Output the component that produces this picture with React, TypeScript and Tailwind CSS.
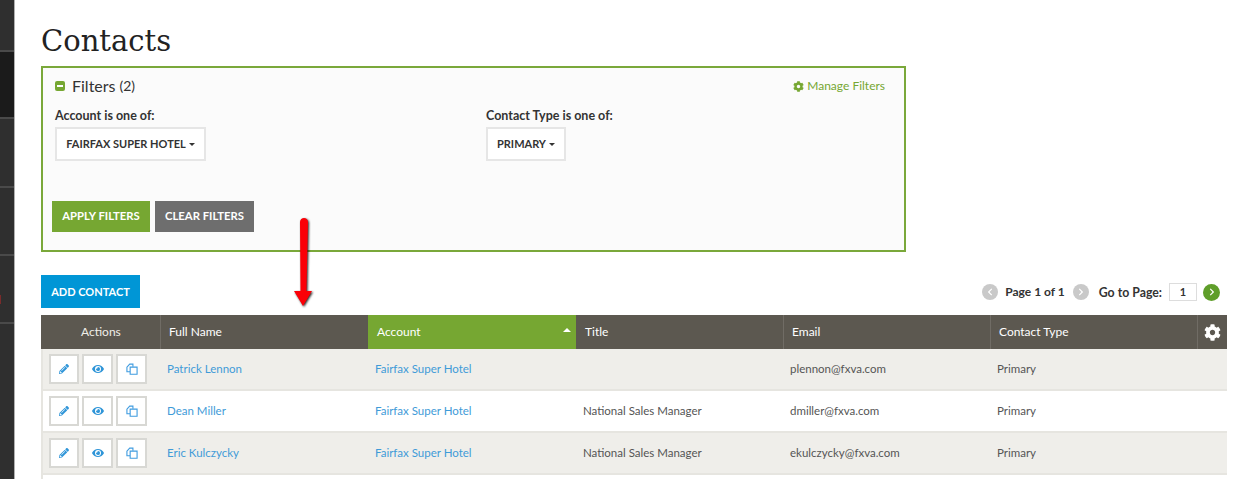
import React from 'react';
import { FaChevronLeft, FaChevronRight, FaCog, FaEye, FaPencilAlt } from 'react-icons/fa';

const rows = [
  { name: 'Patrick Lennon', title: '', email: 'plennon@fxva.com' },
  { name: 'Dean Miller', title: 'National Sales Manager', email: 'dmiller@fxva.com' },
  { name: 'Eric Kulczycky', title: 'National Sales Manager', email: 'ekulczycky@fxva.com' },
];

const columns = 'grid grid-cols-[119px_208px_208px_207px_207px_207px_30px]';

const IconButton = ({ children }: { children: React.ReactNode }) => (
  <div className="flex h-[30px] w-[31px] items-center justify-center border-2 border-[#d8d8d4] bg-white text-[#2f95d8] first:w-[30px]">
    {children}
  </div>
);

const CopyIcon = () => (
  <svg width="12" height="12" viewBox="0 0 13 13" fill="none" stroke="#3f9ce0" strokeWidth="1.2">
    <path d="M4.5 9.5H1V4.5L4 1.2H7.5V4" />
    <path d="M4.5 4.5H12V12.2H4.5Z" fill="#fff" />
  </svg>
);

const Sidebar = () => (
  <div className="flex w-[15px] shrink-0 flex-col border-r border-[#b0b0b0] bg-[#2f2f2f]">
    <div className="h-[52px] border-b-2 border-[#4a4a4a]" />
    <div className="h-[67px] border-b-2 border-[#4a4a4a] bg-[#1b1b1b]" />
    <div className="h-[69px] border-b-2 border-[#4a4a4a]" />
    <div className="h-[68px] border-b-2 border-[#4a4a4a]" />
    <div className="h-[68px] border-b-2 border-[#4a4a4a] pt-[39px]">
      <div className="h-[9px] w-[1px] bg-[#7a2b2b]" />
    </div>
  </div>
);

const Filters = () => (
  <div className="mt-[6px] h-[186px] w-[865px] border-2 border-[#7aa83a] bg-[#fbfbfb] pl-[9px]">
    <div className="flex items-start justify-between pr-[19px] pl-[3px] pt-[8px]">
      <div className="flex items-center">
        <span className="flex h-[10px] w-[10px] items-center justify-center rounded-[2px] bg-[#76a732]">
          <span className="h-[2px] w-[6px] bg-white" />
        </span>
        <span className="ml-[7px] text-[16px] leading-[20px] text-[#333]">Filters</span>
        <span className="ml-[4px] text-[14px] leading-[20px] text-[#333]">(2)</span>
      </div>
      <div className="mt-[1px] flex items-center gap-[3px] text-[12px] text-[#76a732]">
        <FaCog size={11} />
        <span>Manage Filters</span>
      </div>
    </div>
    <div className="mt-[12px] flex pl-[3px]">
      <div className="w-[431px]">
        <div className="text-[12.5px] leading-[16px] font-bold text-[#333]">Account is one of:</div>
        <div className="mt-[3px] flex h-[34px] w-[151px] items-center justify-center gap-[3px] border-2 border-[#e6e6e6] bg-white text-[11px] font-bold text-[#333]">
          FAIRFAX SUPER HOTEL
          <span className="mt-[1px] border-x-[3px] border-t-[3px] border-x-transparent border-t-[#333]" />
        </div>
      </div>
      <div>
        <div className="text-[12.5px] leading-[16px] font-bold text-[#333]">Contact Type is one of:</div>
        <div className="mt-[3px] flex h-[34px] w-[80px] items-center justify-center gap-[3px] border-2 border-[#e6e6e6] bg-white text-[11px] font-bold text-[#333]">
          PRIMARY
          <span className="mt-[1px] border-x-[3px] border-t-[3px] border-x-transparent border-t-[#333]" />
        </div>
      </div>
    </div>
    <div className="mt-[40px] flex gap-[5px] text-[11.3px] font-bold text-white">
      <div className="flex h-[31px] w-[98px] items-center justify-center bg-[#76a732]">APPLY FILTERS</div>
      <div className="flex h-[31px] w-[99px] items-center justify-center bg-[#6e6e6e]">CLEAR FILTERS</div>
    </div>
  </div>
);

const Pager = () => (
  <div className="flex items-center pb-[6px] pr-[7px] text-[12px] font-bold text-[#333]">
    <span className="flex h-[16px] w-[16px] items-center justify-center rounded-full bg-[#c9c9c9] text-white">
      <FaChevronLeft size={8} />
    </span>
    <span className="ml-[7px]">Page 1 of 1</span>
    <span className="ml-[8px] flex h-[16px] w-[16px] items-center justify-center rounded-full bg-[#c9c9c9] text-white">
      <FaChevronRight size={8} />
    </span>
    <span className="ml-[10px] pt-[1px] text-[12.3px]">Go to Page:</span>
    <span className="ml-[7px] flex h-[18px] w-[28px] items-center justify-center border border-[#ddd] bg-white text-[11px]">1</span>
    <span className="ml-[6px] flex h-[17px] w-[17px] items-center justify-center rounded-full bg-[#5f9e2a] text-white">
      <FaChevronRight size={8} />
    </span>
  </div>
);

const Table = () => (
  <div className="w-[1186px]">
    <div className={`${columns} h-[34px] bg-[#5c5850] text-[12px] text-white`}>
      <div className="pl-[40px] pt-[8px] text-[#f0eee8]">Actions</div>
      <div className="flex items-center border-l border-[#706c65] pl-[8px]">Full Name</div>
      <div className="relative flex items-center bg-[#76a732] pl-[9px]">
        Account
        <span className="absolute top-[13px] right-[5px] border-x-[4px] border-b-[4px] border-x-transparent border-b-white" />
      </div>
      <div className="flex items-center pl-[9px]">Title</div>
      <div className="flex items-center border-l border-[#706c65] pl-[8px]">Email</div>
      <div className="flex items-center border-l border-[#706c65] pl-[8px]">Contact Type</div>
      <div className="flex items-center border-l border-[#706c65] pl-[6px]">
        <FaCog size={17} />
      </div>
    </div>
    {rows.map((row, i) => (
      <div
        key={row.name}
        className={`${columns} h-[42px] items-center border-b-2 border-l-2 border-[#e6e5e0] text-[11.5px] text-[#555] ${i % 2 === 0 ? 'bg-[#efeeea]' : 'bg-white'}`}
      >
        <div className="flex gap-[3px] pl-[6px]">
          <IconButton><FaPencilAlt size={10} /></IconButton>
          <IconButton><FaEye size={12} /></IconButton>
          <IconButton><CopyIcon /></IconButton>
        </div>
        <div className="pl-[5px] text-[#3f9bd8]">{row.name}</div>
        <div className="pl-[5px] text-[#3f9bd8]">Fairfax Super Hotel</div>
        <div className="pl-[5px]">{row.title}</div>
        <div className="pl-[5px]">{row.email}</div>
        <div className="pl-[5px]">Primary</div>
        <div />
      </div>
    ))}
    <div className="h-[4px] border-l-2 border-[#e6e5e0]" />
  </div>
);

const Arrow = () => (
  <svg className="absolute top-[214px] left-[288px] drop-shadow-[1px_1px_1px_rgba(0,0,0,0.85)]" width="30" height="96" viewBox="0 0 30 96">
    <path d="M12 8 C12 2.5 20 2.5 20 8 L18.5 77 L24 77 L15 92 L6 77 L12.5 77 Z" fill="#fb0007" />
  </svg>
);

export default function App() {
  return (
    <div className="relative flex h-[479px] w-[1233px] overflow-hidden bg-white font-['Lato','Liberation_Sans',sans-serif]">
      <Sidebar />
      <div className="pl-[26px]">
        <h1 className="pt-[22px] font-['DejaVu_Serif',serif] text-[29px] leading-[38px] text-[#222]">Contacts</h1>
        <Filters />
        <div className="mt-[23px] flex w-[1186px] items-end justify-between">
          <div className="flex h-[33px] w-[99px] items-center justify-center bg-[#0096d6] pt-[1px] text-[11px] font-bold text-white">ADD CONTACT</div>
          <Pager />
        </div>
        <div className="mt-[7px]">
          <Table />
        </div>
      </div>
      <Arrow />
    </div>
  );
}
